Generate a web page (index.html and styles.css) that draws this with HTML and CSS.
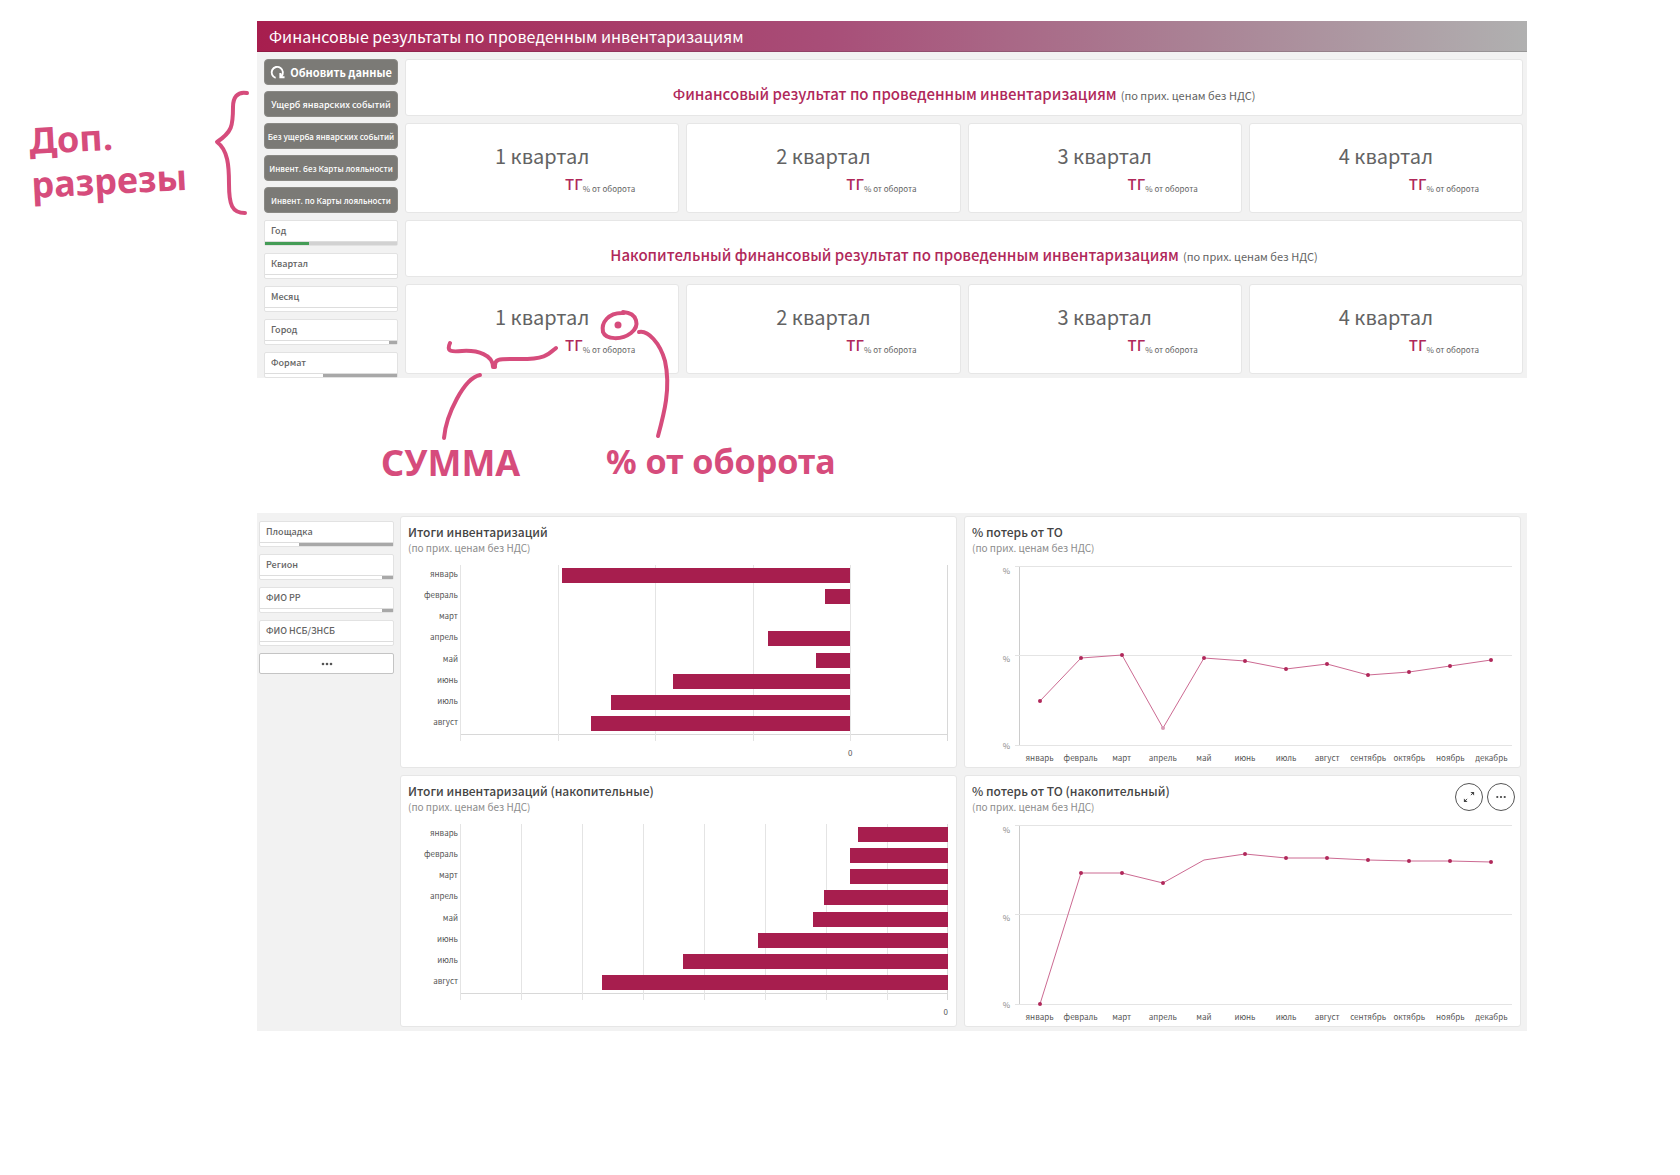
FILE: index.html
```html
<!DOCTYPE html>
<html lang="ru">
<head>
<meta charset="utf-8">
<meta name="viewport" content="width=device-width, initial-scale=1">
<title>Финансовые результаты по проведенным инвентаризациям</title>
<link rel="stylesheet" href="styles.css">
</head>
<body>
<main class="page">
  <section class="panel summary">
    <header class="topbar"><h1>Финансовые результаты по проведенным инвентаризациям</h1></header>
    <div class="summary-body">
      <aside class="side">
        <div class="actions">
          <button type="button" class="action action-main"><svg class="reload" viewBox="0 0 16 16" aria-hidden="true"><path d="M6 13.700A6 6 0 1 1 12 12.200M11 8.500v4.500h4.500"/></svg>Обновить данные</button>
          <button type="button" class="action action-mid">Ущерб январских событий</button>
          <button type="button" class="action">Без ущерба январских событий</button>
          <button type="button" class="action">Инвент. без Карты лояльности</button>
          <button type="button" class="action">Инвент. по Карты лояльности</button>
        </div>
        <div class="filters">
          <button type="button" class="filter"><span>Год</span><i class="state rest"><b class="picked" style="width:33%"></b></i></button>
          <button type="button" class="filter"><span>Квартал</span><i class="state"></i></button>
          <button type="button" class="filter"><span>Месяц</span><i class="state"></i></button>
          <button type="button" class="filter"><span>Город</span><i class="state"><b style="width:6%"></b></i></button>
          <button type="button" class="filter"><span>Формат</span><i class="state"><b style="width:56%"></b></i></button>
        </div>
      </aside>
      <div class="results">
        <h2 class="card band"><strong>Финансовый результат по проведенным инвентаризациям</strong><small>(по прих. ценам без НДС)</small></h2>
        <div class="quarters">
          <article class="card quarter"><h3>1 квартал</h3><p><b>ТГ</b><small>% от оборота</small></p></article>
          <article class="card quarter"><h3>2 квартал</h3><p><b>ТГ</b><small>% от оборота</small></p></article>
          <article class="card quarter"><h3>3 квартал</h3><p><b>ТГ</b><small>% от оборота</small></p></article>
          <article class="card quarter"><h3>4 квартал</h3><p><b>ТГ</b><small>% от оборота</small></p></article>
        </div>
        <h2 class="card band"><strong>Накопительный финансовый результат по проведенным инвентаризациям</strong><small>(по прих. ценам без НДС)</small></h2>
        <div class="quarters">
          <article class="card quarter"><h3>1 квартал</h3><p><b>ТГ</b><small>% от оборота</small></p></article>
          <article class="card quarter"><h3>2 квартал</h3><p><b>ТГ</b><small>% от оборота</small></p></article>
          <article class="card quarter"><h3>3 квартал</h3><p><b>ТГ</b><small>% от оборота</small></p></article>
          <article class="card quarter"><h3>4 квартал</h3><p><b>ТГ</b><small>% от оборота</small></p></article>
        </div>
      </div>
    </div>
  </section>

  <section class="panel details">
    <aside class="filters">
      <button type="button" class="filter"><span>Площадка</span><i class="state"><b style="width:71%"></b></i></button>
      <button type="button" class="filter"><span>Регион</span><i class="state"><b style="width:8%"></b></i></button>
      <button type="button" class="filter"><span>ФИО РР</span><i class="state"><b style="width:8%"></b></i></button>
      <button type="button" class="filter"><span>ФИО НСБ/ЗНСБ</span><i class="state"></i></button>
      <button type="button" class="more" aria-label="Ещё"><svg viewBox="0 0 12 4" aria-hidden="true"><circle cx="2" cy="2" r="1.300"/><circle cx="6" cy="2" r="1.300"/><circle cx="10" cy="2" r="1.300"/></svg></button>
    </aside>
    <div class="charts">
      <article class="card chart">
        <h3>Итоги инвентаризаций</h3>
        <p class="sub">(по прих. ценам без НДС)</p>
        <div class="bars">
          <ul class="months"><li>январь</li><li>февраль</li><li>март</li><li>апрель</li><li>май</li><li>июнь</li><li>июль</li><li>август</li></ul>
          <div class="plot">
            <div class="grid"><i></i><i></i><i></i><i></i><i class="last"></i></div>
            <div class="series zero-inner">
              <i style="width:74%"></i><i style="width:6.5%"></i><i style="width:0"></i><i style="width:21.2%"></i><i style="width:8.8%"></i><i style="width:45.4%"></i><i style="width:61.2%"></i><i style="width:66.5%"></i>
            </div>
          </div>
          <p class="zero zero-mid">0</p>
        </div>
      </article>
      <article class="card chart">
        <h3>% потерь от ТО</h3>
        <p class="sub">(по прих. ценам без НДС)</p>
        <div class="lines">
          <ul class="percents"><li>%</li><li>%</li><li>%</li></ul>
          <svg class="curve" viewBox="0 0 492 180" preserveAspectRatio="none" aria-hidden="true">
            <path class="rule" d="M-5 .5H492M-5 89.500H492M-5 179.500H492"/>
            <path class="line" d="M20 135L61 92L102 89L143 162L184 92L225 95L266 103L307 98L348 109L389 106L430 100L471 94"/>
            <path class="dots" d="M20 135h0M61 92h0M102 89h0M184 92h0M225 95h0M266 103h0M307 98h0M348 109h0M389 106h0M430 100h0M471 94h0"/>
            <path class="dots faint" d="M143 162h0"/>
          </svg>
          <ul class="year"><li>январь</li><li>февраль</li><li>март</li><li>апрель</li><li>май</li><li>июнь</li><li>июль</li><li>август</li><li>сентябрь</li><li>октябрь</li><li>ноябрь</li><li>декабрь</li></ul>
        </div>
      </article>
      <article class="card chart">
        <h3>Итоги инвентаризаций (накопительные)</h3>
        <p class="sub">(по прих. ценам без НДС)</p>
        <div class="bars">
          <ul class="months"><li>январь</li><li>февраль</li><li>март</li><li>апрель</li><li>май</li><li>июнь</li><li>июль</li><li>август</li></ul>
          <div class="plot">
            <div class="grid"><i></i><i></i><i></i><i></i><i></i><i></i><i></i><i class="last"></i></div>
            <div class="series">
              <i style="width:18.5%"></i><i style="width:20.1%"></i><i style="width:20.1%"></i><i style="width:25.4%"></i><i style="width:27.6%"></i><i style="width:39%"></i><i style="width:54.3%"></i><i style="width:70.9%"></i>
            </div>
          </div>
          <p class="zero">0</p>
        </div>
      </article>
      <article class="card chart">
        <div class="tools">
          <button type="button" class="round" aria-label="Развернуть"><svg viewBox="0 0 28 28" aria-hidden="true"><path d="M15.500 8.500h4v4zM8.500 15.500v4h4z"/><path class="thin" d="M19 9l-3 3M9 19l3-3"/></svg></button>
          <button type="button" class="round" aria-label="Меню"><svg viewBox="0 0 28 28" aria-hidden="true"><circle cx="10" cy="14" r="1.200"/><circle cx="14" cy="14" r="1.200"/><circle cx="18" cy="14" r="1.200"/></svg></button>
        </div>
        <h3>% потерь от ТО (накопительный)</h3>
        <p class="sub">(по прих. ценам без НДС)</p>
        <div class="lines">
          <ul class="percents"><li>%</li><li>%</li><li>%</li></ul>
          <svg class="curve" viewBox="0 0 492 180" preserveAspectRatio="none" aria-hidden="true">
            <path class="rule" d="M-5 .5H492M-5 89.500H492M-5 179.500H492"/>
            <path class="line" d="M20 179L61 48L102 48L143 58L184 35L225 29L266 33L307 33L348 35L389 36L430 36L471 37"/>
            <path class="dots" d="M20 179h0M61 48h0M102 48h0M143 58h0M225 29h0M266 33h0M307 33h0M348 35h0M389 36h0M430 36h0M471 37h0"/>
          </svg>
          <ul class="year"><li>январь</li><li>февраль</li><li>март</li><li>апрель</li><li>май</li><li>июнь</li><li>июль</li><li>август</li><li>сентябрь</li><li>октябрь</li><li>ноябрь</li><li>декабрь</li></ul>
        </div>
      </article>
    </div>
  </section>

  <div class="notes">
    <svg class="ink" viewBox="0 0 860 460" aria-hidden="true">
      <path d="M247 93C237 91 233 98 233 107C233 126 232 132 217 142C228 150 229 166 229 184C229 205 232 213 245 213"/>
      <path d="M450 343C446 352 452 352 462 351C478 350 493 355 493 367M495 367C494 358 500 359 520 359C546 359 549 354 556 348"/>
      <path d="M480 375C464 378 446 415 444 438"/>
      <path d="M624 313C608 312 601 323 603 332C606 340 622 340 631 333C640 326 638 313 623 312"/>
      <path class="dot" d="M618 325h0"/>
      <path d="M639 332C648 330 660 343 665 361C671 388 664 414 658 436"/>
    </svg>
    <p class="note note-cuts">Доп.<br>разрезы</p>
    <p class="note note-sum">СУММА</p>
    <p class="note note-share">% от оборота</p>
  </div>
</main>
</body>
</html>
```
FILE: styles.css
```css
:root {
  --wine: #a71e4e;
  --ink: #d64c7c;
  --gray: #f2f2f2;
  --text: #636363;
}
* { box-sizing: border-box; }
body {
  margin: 0;
  background: #fff;
  color: var(--text);
  font-family: "Noto Sans CJK SC", "Noto Sans", sans-serif;
}
h1, h2, h3, p, ul { margin: 0; padding: 0; font-weight: 400; }
ul { list-style: none; }
button { margin: 0; padding: 0; border: 0; font: inherit; color: inherit; cursor: pointer; }

.page {
  position: relative;
  min-height: 100vh;
  padding: 21px 153px 144px 257px;
  display: flex;
  flex-direction: column;
  gap: 135px;
}
.panel { background: var(--gray); }
.card {
  background: #fff;
  border: 1px solid #e6e6e6;
  border-radius: 3px;
}

/* Summary */
.topbar {
  height: 31px;
  padding: 0 12px;
  background: linear-gradient(90deg, #a71e4e, #a84e78 45%, #aa8496 75%, #b0b0b0);
  border-bottom: 1px solid #0002;
  color: #fff;
}
.topbar h1 { font-size: 16px; line-height: 30px; }
.summary-body { display: flex; gap: 7px; padding: 7px 4px 0 7px; }
.side { flex: 0 0 134px; }
.actions { display: grid; gap: 6px; margin-bottom: 7px; }
.action {
  height: 26px;
  display: flex;
  align-items: center;
  justify-content: center;
  gap: 5px;
  background: #7b7a76;
  border: 1px solid #8a8985;
  border-radius: 4px;
  color: #fff;
  font-size: 8px;
  font-weight: 500;
  white-space: nowrap;
}
.action-mid { font-size: 9px; }
.action-main { font-size: 11px; font-weight: 700; }
.reload { width: 15px; height: 15px; fill: none; stroke: #fff; stroke-width: 2; }
.filters { display: grid; gap: 7px; align-content: start; }
.filter {
  height: 26px;
  display: flex;
  flex-direction: column;
  background: #fff;
  border: 1px solid #e2e2e2;
  border-radius: 2px;
  text-align: left;
  font-size: 9px;
  font-weight: 500;
}
.filter span { flex: 1; padding: 0 6px; line-height: 20px; }
.state {
  height: 4px;
  display: flex;
  justify-content: flex-end;
  border-top: 1px solid #ddd;
}
.state b { background: #a8a8a8; }
.rest { justify-content: flex-start; background: #d2d2d2; }
.rest .picked { background: #449c56; }

.results { flex: 1; min-width: 0; padding-bottom: 4px; }
.band { height: 57px; line-height: 16px; padding-top: 22px; text-align: center; }
.band strong { margin-right: 4px; font-size: 15px; font-weight: 500; color: #b0285a; }
.band small { font-size: 11px; }
.quarters {
  display: grid;
  grid-template-columns: repeat(4, 1fr);
  gap: 7px;
  margin: 7px 0;
}
.quarters:last-child { margin-bottom: 0; }
.quarter { height: 90px; padding-top: 19px; text-align: center; }
.quarter h3 { font-size: 20px; line-height: 26px; }
.quarter p { padding-left: 116px; line-height: 28px; }
.quarter b { font-size: 15px; font-weight: 500; color: #b0285a; }
.quarter small { font-size: 8px; vertical-align: -2px; }

/* Details */
.details { display: flex; gap: 6px; padding: 3px 6px 4px 2px; }
.details .filters { flex: 0 0 135px; padding-top: 5px; }
.more { height: 21px; background: #fff; border: 1px solid #c4c4c4; border-radius: 2px; }
.more svg { display: block; width: 12px; height: 4px; margin: 0 auto; fill: #555; }
.charts {
  flex: 1;
  min-width: 0;
  display: grid;
  grid-template-columns: repeat(2, minmax(0, 1fr));
  gap: 7px;
}
.chart { position: relative; height: 252px; padding: 7px 8px 0 7px; }
.chart h3 { font-size: 12px; line-height: 16px; font-weight: 500; color: #444; }
.sub { font-size: 10px; line-height: 15px; color: #8c8c8c; }
.bars, .lines { font-size: 8px; color: #555; }
.bars {
  display: grid;
  grid-template-columns: 50px 1fr;
  column-gap: 2px;
  padding-top: 10px;
}
.months { height: 169px; display: grid; grid-template-rows: repeat(8, 1fr); text-align: right; }
.months li { line-height: 18px; }
.plot { display: grid; height: 176px; }
.grid, .series { grid-area: 1 / 1; display: grid; }
.grid {
  grid-auto-flow: column;
  grid-auto-columns: 1fr;
  background: linear-gradient(#d8d8d8, #d8d8d8) 0 169px / 100% 1px no-repeat;
}
.grid i { border-left: 1px solid #e4e4e4; }
.grid .last { border-right: 1px solid #d8d8d8; }
.series { height: 169px; grid-template-rows: repeat(8, 1fr); align-items: center; justify-items: end; }
.series i { height: 15px; background: var(--wine); }
.series.zero-inner { width: 80%; }
.zero { grid-column: 2; line-height: 24px; text-align: right; }
.zero-mid { width: 80%; padding-left: 2px; box-sizing: content-box; }
.lines {
  display: grid;
  grid-template-columns: 46px 1fr;
  column-gap: 1px;
  padding-top: 11px;
}
.percents { display: flex; flex-direction: column; justify-content: space-between; margin-bottom: -5px; padding-right: 8px; text-align: right; line-height: 10px; color: #888; }
.curve { width: 100%; height: 180px; overflow: visible; border-left: 1px solid #ccc; fill: none; }
.curve path { vector-effect: non-scaling-stroke; }
.rule { stroke: #e4e4e4; }
.line { stroke: #cc6a92; }
.dots { stroke: #b0285a; stroke-width: 4; stroke-linecap: round; }
.faint { stroke: #d99ab5; }
.year { grid-column: 2; display: grid; grid-template-columns: repeat(12, 1fr); text-align: center; line-height: 24px; }
.year li { display: flex; justify-content: center; white-space: nowrap; }
.tools { position: absolute; top: 7px; right: 5px; display: flex; gap: 4px; }
.round { width: 28px; height: 28px; background: #fff; border: 1px solid #555; border-radius: 50%; }
.round svg { display: block; width: 26px; height: 26px; fill: #444; }
.thin { stroke: #444; }

/* Handwritten remarks over the dashboards */
.notes { position: absolute; top: 0; left: 0; width: 860px; pointer-events: none; }
.ink { display: block; width: 860px; height: 460px; fill: none; stroke: var(--ink); stroke-width: 4; stroke-linecap: round; stroke-linejoin: round; }
.ink .dot { stroke-width: 7; }
.note {
  position: absolute;
  color: var(--ink);
  font-family: "Noto Sans", sans-serif;
  font-size: 34px;
  font-weight: 700;
  line-height: 40px;
  white-space: nowrap;
}
.note-cuts { left: 30px; top: 115px; font-size: 36px; line-height: 44px; rotate: -3deg; }
.note-sum { left: 381px; top: 443px; font-size: 36px; }
.note-share { left: 606px; top: 441px; }
```
